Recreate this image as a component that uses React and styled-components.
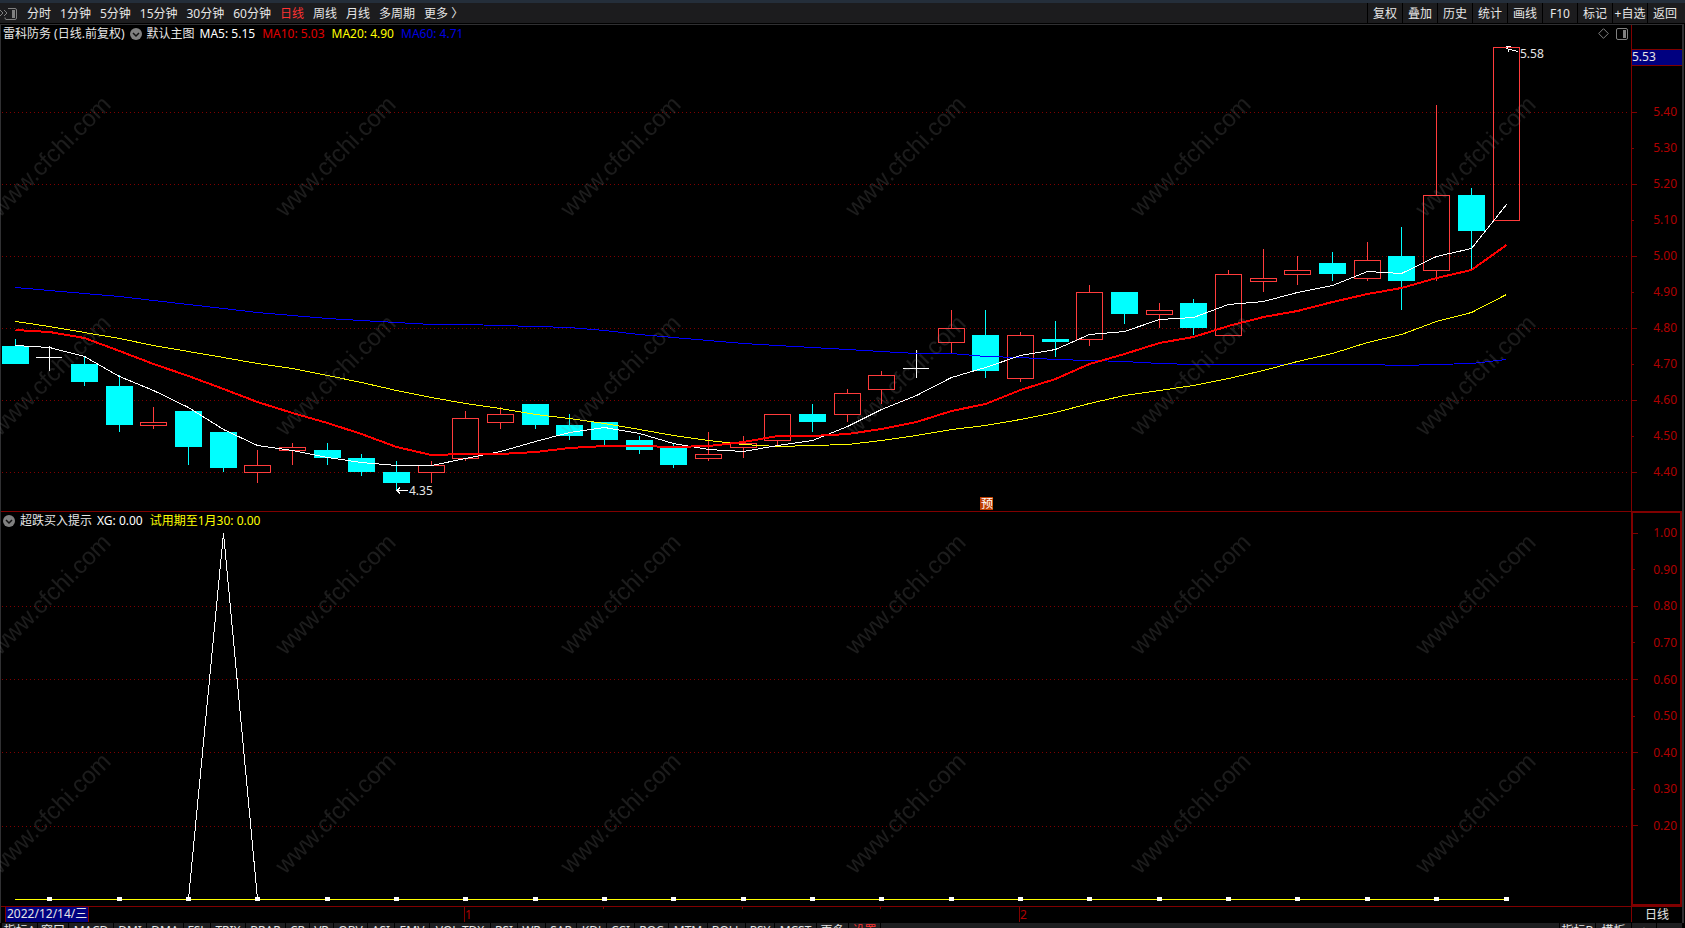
import { Fragment } from 'react';
import styled, { createGlobalStyle } from 'styled-components';

const GlobalStyle = createGlobalStyle`
	* {
		box-sizing: border-box;
	}

	body {
		margin: 0;
		background: #000;
		color: #e6e6e6;
		font: 12px/16px 'Noto Sans', 'Noto Sans CJK SC', sans-serif;
	}

	button {
		margin: 0;
		padding: 0;
		border: 0;
		background: none;
		color: inherit;
		font: inherit;
		white-space: nowrap;
		cursor: pointer;
	}
`;

const Page = styled.div`
	position: relative;
	display: flex;
	flex-direction: column;
	height: 100vh;
	overflow: hidden;
`;

const Toolbar = styled.header`
	flex: none;
	display: flex;
	height: 24px;
	border-top: 3px solid #242e3a;
	border-bottom: 1px solid #000;
	background: #1c1c1e;
`;

const Periods = styled.nav`
	flex: 1;
	display: flex;
	align-items: center;
	gap: 9px;
	padding-top: 2px;
`;

const PeriodButton = styled.button`
	color: ${(props) => props.$active ? '#ff3232' : '#e6e6e6'};
`;

const ToolButton = styled.button`
	width: 35px;
	padding-top: 2px;
	border-left: 1px solid #000;
`;

const Workspace = styled.main`
	flex: 1;
	min-height: 0;
	display: flex;
	flex-direction: column;
	border: solid #303032;
	border-width: 1px 2px 0 1px;
	margin-right: 1px;
`;

const Panel = styled.section`
	flex: ${(props) => props.$share} 1 0;
	min-height: 0;
	display: grid;
	grid-template-columns: minmax(0, 1fr) 51px;
`;

const PlotColumn = styled.div`
	display: flex;
	flex-direction: column;
	min-height: 0;
	border-top: ${(props) => props.$divided ? '1px solid #800000' : '0'};
`;

const Legend = styled.div`
	flex: none;
	display: flex;
	align-items: center;
	gap: 5px;
	height: 17px;
	padding: 0 3px 0 2px;
	white-space: nowrap;
`;

const LegendValues = styled.div`
	display: flex;
	gap: 7px;
`;

const LegendText = styled.span`
	color: ${(props) => props.$color || '#e6e6e6'};
`;

const LegendTools = styled.div`
	display: flex;
	align-items: center;
	gap: 7px;
	margin-left: auto;
`;

const IconButton = styled.button`
	display: flex;
`;

const Plot = styled.svg`
	flex: 1;
	display: block;
	width: 100%;
	min-height: 0;
	shape-rendering: crispEdges;
`;

const Axis = styled.div`
	display: flex;
	flex-direction: column;
	border: solid #800000;
	border-width: ${(props) => props.$boxed ? '2px' : '0 0 0 1px'};
	padding: ${(props) => props.$boxed ? '2px 0 60px' : '24px 0 21px'};
`;

const PriceTag = styled.div`
	height: 17px;
	margin-bottom: 28px;
	border: solid #800000;
	border-width: 1px 0;
	background: #000080;
	line-height: 14px;
`;

const AxisLabel = styled.div`
	flex: 1;
	display: flex;
	align-items: center;
	justify-content: space-between;
	padding-right: ${(props) => props.$boxed ? '3px' : '5px'};
	color: #b00000;

	&::before {
		content: '';
		width: ${(props) => props.$major ? '5px' : '2px'};
		height: 1px;
		background: #800000;
	}
`;

const TimeRow = styled.div`
	flex: none;
	display: grid;
	grid-template-columns: minmax(0, 1fr) 51px;
	height: 17px;
	border-top: 1px solid #800000;
`;

const TimeScale = styled.div`
	position: relative;
	display: flex;
`;

const DateTag = styled.div`
	position: absolute;
	top: 0;
	left: 4px;
	height: 15px;
	padding: 0 1px;
	border: solid #800000;
	border-width: 0 1px;
	background: #000080;
	line-height: 14px;
`;

const PeriodCell = styled.div`
	height: 15px;
	border-left: 1px solid #800000;
	text-align: center;
	line-height: 16px;
`;

const TabBar = styled.footer`
	flex: none;
	display: flex;
	gap: 1px;
	height: 5px;
	padding: 0 3px 0 2px;
	overflow: hidden;
`;

const Tab = styled.button`
	flex: none;
	width: ${(props) => props.$width}px;
	height: 16px;
	background: #1e1e20;
	color: ${(props) => props.$alert ? '#ff3232' : '#e6e6e6'};
	line-height: 16px;
`;

const TabFill = styled.div`
	flex: 1;
	background: #1e1e20;
`;

const Watermark = styled.svg`
	position: absolute;
	inset: 25px 0 0;
	width: 100%;
	height: calc(100% - 47px);
	pointer-events: none;
`;

const periods = ['分时', '1分钟', '5分钟', '15分钟', '30分钟', '60分钟', '日线', '周线', '月线', '多周期', '更多 〉'];
const tools = ['复权', '叠加', '历史', '统计', '画线', 'F10', '标记', '+自选', '返回'];
const prices = ['5.40', '5.30', '5.20', '5.10', '5.00', '4.90', '4.80', '4.70', '4.60', '4.50', '4.40'];
const levels = ['1.00', '0.90', '0.80', '0.70', '0.60', '0.50', '0.40', '0.30', '0.20'];

const tabs = [
	['指标A', 35], ['窗口', 30], ['MACD', 44], ['DMI', 32], ['DMA', 36], ['FSL', 26], ['TRIX', 34],
	['BRAR', 39], ['CR', 23], ['VR', 23], ['OBV', 33], ['ASI', 26], ['EMV', 34], ['VOL-TDX', 60],
	['RSI', 26], ['WR', 27], ['SAR', 30], ['KDJ', 29], ['CCI', 27], ['ROC', 33], ['MTM', 38],
	['BOLL', 37], ['PSY', 28], ['MCST', 41], ['更多', 31], ['设置', 31],
];

// [type, top, bottom, high, low]
const candles = [
	['down', 4.75, 4.70, 4.77, 4.70],
	['flat', 4.72, 4.72, 4.75, 4.68],
	['down', 4.70, 4.65, 4.72, 4.64],
	['down', 4.64, 4.53, 4.67, 4.51],
	['up', 4.54, 4.53, 4.58, 4.52],
	['down', 4.57, 4.47, 4.57, 4.42],
	['down', 4.51, 4.41, 4.51, 4.40],
	['up', 4.42, 4.40, 4.46, 4.37],
	['up', 4.47, 4.46, 4.48, 4.42],
	['down', 4.46, 4.44, 4.48, 4.42],
	['down', 4.44, 4.40, 4.45, 4.39],
	['down', 4.40, 4.37, 4.43, 4.35],
	['up', 4.42, 4.40, 4.43, 4.37],
	['up', 4.55, 4.44, 4.57, 4.43],
	['up', 4.56, 4.54, 4.58, 4.52],
	['down', 4.59, 4.53, 4.59, 4.52],
	['down', 4.53, 4.50, 4.56, 4.49],
	['down', 4.54, 4.49, 4.54, 4.47],
	['down', 4.49, 4.46, 4.50, 4.45],
	['down', 4.47, 4.42, 4.48, 4.41],
	['up', 4.45, 4.44, 4.51, 4.43],
	['up', 4.48, 4.47, 4.50, 4.44],
	['up', 4.56, 4.49, 4.56, 4.47],
	['down', 4.56, 4.54, 4.59, 4.51],
	['up', 4.62, 4.56, 4.63, 4.54],
	['up', 4.67, 4.63, 4.68, 4.59],
	['flat', 4.69, 4.69, 4.74, 4.66],
	['up', 4.80, 4.76, 4.85, 4.73],
	['down', 4.78, 4.68, 4.85, 4.66],
	['up', 4.78, 4.66, 4.79, 4.65],
	['down', 4.77, 4.76, 4.82, 4.72],
	['up', 4.90, 4.77, 4.92, 4.75],
	['down', 4.90, 4.84, 4.90, 4.81],
	['up', 4.85, 4.84, 4.87, 4.80],
	['down', 4.87, 4.80, 4.88, 4.78],
	['up', 4.95, 4.78, 4.96, 4.78],
	['up', 4.94, 4.93, 5.02, 4.90],
	['up', 4.96, 4.95, 5.00, 4.92],
	['down', 4.98, 4.95, 5.01, 4.93],
	['up', 4.99, 4.94, 5.04, 4.93],
	['down', 5.00, 4.93, 5.08, 4.85],
	['up', 5.17, 4.96, 5.42, 4.93],
	['down', 5.17, 5.07, 5.19, 4.96],
	['up', 5.58, 5.10, 5.58, 5.10],
];

// plot heights of the averages, one per candle
const averages = [
	{
		color: '#0000ff',
		width: 1,
		points: [
			287, 290, 293, 296, 300, 304, 308, 312, 315, 318, 320, 322, 324, 324, 325, 326, 327, 330, 334, 337, 340, 343,
			345, 347, 349, 351, 353, 353, 356, 357, 359, 360, 361, 363, 364, 364, 364, 364, 364, 364, 365, 364, 363, 359,
		],
	},
	{
		color: '#ffff00',
		width: 1,
		points: [
			321, 326, 332, 338, 345, 351, 357, 363, 368, 375, 382, 390, 397, 403, 408, 414, 418, 423, 429, 435, 440, 444,
			446, 445, 444, 440, 435, 429, 425, 419, 412, 403, 395, 390, 385, 378, 370, 361, 353, 342, 334, 321, 312, 294,
		],
	},
	{
		color: '#ffffff',
		width: 1,
		points: [
			345, 347, 356, 376, 390, 407, 429, 445, 450, 457, 462, 465, 465, 458, 451, 441, 432, 427, 433, 443, 449, 451,
			445, 440, 426, 409, 395, 377, 367, 355, 349, 334, 331, 319, 317, 304, 301, 292, 285, 271, 273, 256, 248, 204,
		],
	},
	{
		color: '#ff0000',
		width: 2,
		points: [
			330, 332, 338, 351, 364, 376, 389, 402, 413, 423, 434, 447, 455, 454, 454, 452, 448, 446, 446, 447, 446, 442,
			436, 436, 434, 429, 422, 411, 404, 390, 379, 364, 354, 343, 337, 326, 317, 311, 302, 294, 288, 278, 270, 245,
		],
	},
];

const xAt = (index) => Math.floor(15 + (index * 1491) / 43);
const yAt = (price) => Math.round(256 + (5 - price) * 360);
const toPoints = (values, shift) => values.map((y, index) => `${xAt(index) + 0.5},${y + shift}`).join(' ');

const FoldIcon = () => (
	<svg width="12" height="12" viewBox="0 0 12 12">
		<circle cx="6" cy="6" r="6" fill="#808080" />
		<path d="M3 5l3 3 3-3" fill="none" stroke="#111" strokeWidth="1.5" />
	</svg>
);

const SideIcon = () => (
	<svg width="12" height="12" viewBox="0 0 12 12">
		<rect x="0.5" y="0.5" width="11" height="11" rx="1.5" fill="none" stroke="#808080" />
		<rect x="7" y="2" width="3" height="8" fill="#808080" />
	</svg>
);

const Candle = ({ index, candle }) => {
	const [type, top, bottom, high, low] = candle;
	const x = xAt(index);
	const y1 = yAt(top);
	const y2 = yAt(bottom);

	if (type === 'flat') {
		return <path d={`M${x - 13} ${y1 + 0.5}h26M${x + 0.5} ${yAt(high)}V${yAt(low)}`} stroke="#fff" />;
	}

	if (type === 'down') {
		return (
			<g fill="#00ffff">
				<rect x={x - 13} y={y1} width="27" height={y2 - y1} />
				<rect x={x} y={yAt(high)} width="1" height={yAt(low) - yAt(high)} />
			</g>
		);
	}

	return (
		<g fill="none" stroke="#ff3c3c">
			<rect x={x - 12.5} y={y1 + 0.5} width="26" height={y2 - y1} />
			<path d={`M${x + 0.5} ${yAt(high)}V${y1}M${x + 0.5} ${y2}V${yAt(low)}`} />
		</g>
	);
};

const GridLines = ({ rows }) => (
	<g stroke="#800000" strokeDasharray="1 3">
		{rows.map((y) => (
			<path key={y} d={`M2 ${y + 0.5}H1628`} />
		))}
	</g>
);

const PricePlot = () => (
	<Plot viewBox="1 42 1630 469" preserveAspectRatio="none">
		<GridLines rows={[112, 184, 256, 328, 400, 472]} />
		{candles.map((candle, index) => (
			<Candle key={index} index={index} candle={candle} />
		))}
		{averages.map((line) => (
			<polyline
				key={line.color}
				points={toPoints(line.points, line.width === 1 ? 0.5 : 0)}
				fill="none"
				stroke={line.color}
				strokeWidth={line.width}
			/>
		))}
		<g fill="none" stroke="#fff">
			<path d="M1506 48.500L1518 51.500M1511 46.500H1507L1509 52" />
			<path d="M397 490.500H408M400 487.500L397 490.500L400 493.500" />
		</g>
		<g fill="#e6e6e6">
			<text x="1520" y="58">5.58</text>
			<text x="409" y="495">4.35</text>
		</g>
		<rect x="980" y="497" width="13" height="13" fill="#c04000" />
		<text x="981" y="508" fontSize="12" fill="#fff">预</text>
	</Plot>
);

const SignalPlot = () => (
	<Plot viewBox="1 529 1630 377" preserveAspectRatio="none">
		<GridLines rows={[606, 679, 752, 826]} />
		<path d="M15 899.500H1506" stroke="#ffff00" />
		<polyline points="188.500,899 223.500,533 257.500,899" fill="none" stroke="#fff" />
		{candles.map((candle, index) => index % 2 === 1 && (
			<rect key={index} x={xAt(index) - 2} y="897" width="5" height="4" fill="#fff" />
		))}
	</Plot>
);

const App = () => (
	<Fragment>
		<GlobalStyle />
		<Page>
			<Toolbar>
				<Periods>
					<IconButton aria-label="侧栏">
						<svg width="18" height="12" viewBox="0 0 18 12" fill="none" stroke="#808080">
							<path d="M0 2l3 3-3 3M4 2l3 3-3 3" />
							<path d="M8 .5h7q1.500 0 1.500 1.500v8q0 1.500-1.500 1.500H6q-1 0-1-2" />
							<rect x="12" y="2" width="3" height="8" fill="#808080" stroke="none" />
						</svg>
					</IconButton>
					{periods.map((period) => (
						<PeriodButton key={period} $active={period === '日线'}>{period}</PeriodButton>
					))}
				</Periods>
				{tools.map((tool) => (
					<ToolButton key={tool}>{tool}</ToolButton>
				))}
				<svg width="3" height="20" />
			</Toolbar>

			<Workspace>
				<Panel $share={486}>
					<PlotColumn>
						<Legend>
							<LegendText>雷科防务 (日线.前复权)</LegendText>
							<IconButton aria-label="主图菜单"><FoldIcon /></IconButton>
							<LegendText>默认主图</LegendText>
							<LegendValues>
								<LegendText $color="#ffffff">MA5: 5.15</LegendText>
								<LegendText $color="#e00000">MA10: 5.03</LegendText>
								<LegendText $color="#ffff00">MA20: 4.90</LegendText>
								<LegendText $color="#0000e0">MA60: 4.71</LegendText>
							</LegendValues>
							<LegendTools>
								<IconButton aria-label="标记点">
									<svg width="11" height="11" viewBox="0 0 11 11">
										<path d="M5.500 .7L10.300 5.500 5.500 10.300 .7 5.500z" fill="none" stroke="#808080" />
									</svg>
								</IconButton>
								<IconButton aria-label="右侧栏"><SideIcon /></IconButton>
							</LegendTools>
						</Legend>
						<PricePlot />
					</PlotColumn>
					<Axis>
						<PriceTag>5.53</PriceTag>
						{prices.map((price, index) => (
							<AxisLabel key={price} $major={index % 2 === 0}>{price}</AxisLabel>
						))}
					</Axis>
				</Panel>

				<Panel $share={395}>
					<PlotColumn $divided>
						<Legend>
							<IconButton aria-label="指标菜单"><FoldIcon /></IconButton>
							<LegendText>超跌买入提示</LegendText>
							<LegendValues>
								<LegendText $color="#ffffff">XG: 0.00</LegendText>
								<LegendText $color="#ffff00">试用期至1月30: 0.00</LegendText>
							</LegendValues>
						</Legend>
						<SignalPlot />
					</PlotColumn>
					<Axis $boxed>
						{levels.map((level, index) => (
							<AxisLabel key={level} $boxed $major={index % 2 === 0}>{level}</AxisLabel>
						))}
					</Axis>
				</Panel>

				<TimeRow>
					<TimeScale>
						<Plot viewBox="1 907 1630 16" preserveAspectRatio="none">
							<path d="M464.500 907v15M1019.500 907v15M603.500 907v2M742.500 907v2M880.500 907v2" stroke="#800000" />
							<g fill="#b00000">
								<text x="465" y="919">1</text>
								<text x="1020" y="919">2</text>
							</g>
						</Plot>
						<DateTag>2022/12/14/三</DateTag>
					</TimeScale>
					<PeriodCell>日线</PeriodCell>
				</TimeRow>
			</Workspace>

			<TabBar>
				{tabs.map(([label, width]) => (
					<Tab key={label} $width={width} $alert={label === '设置'}>{label}</Tab>
				))}
				<TabFill />
				<Tab $width={35}>指标B</Tab>
				<Tab $width={35}>模板</Tab>
				<Tab $width={24}>+</Tab>
				<Tab $width={25}>-</Tab>
			</TabBar>

			<Watermark>
				<defs>
					<pattern id="site-mark" x="-21" y="66" width="285" height="219" patternUnits="userSpaceOnUse">
						<text
							transform="translate(21 127) rotate(-45)"
							fontFamily="Liberation Sans"
							fontSize="24"
							fill="#808080"
							fillOpacity="0.22"
						>
							www.cfchi.com
						</text>
					</pattern>
				</defs>
				<rect width="100%" height="100%" fill="url(#site-mark)" />
			</Watermark>
		</Page>
	</Fragment>
);

export default App;
